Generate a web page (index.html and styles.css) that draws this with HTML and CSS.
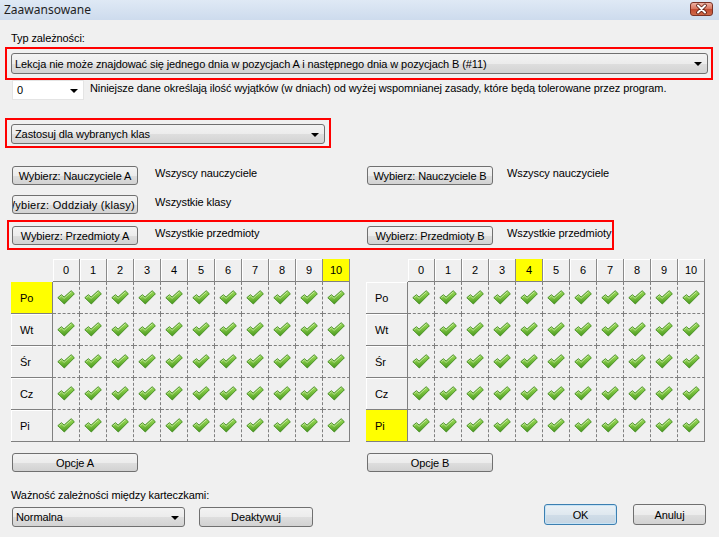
FILE: index.html
```html
<!DOCTYPE html>
<html lang="pl">
<head>
    <meta charset="UTF-8">
    <title>Zaawansowane</title>
    <link rel="stylesheet" href="styles.css">
</head>
<body>
    <svg class="defs" width="0" height="0">
        <defs>
            <linearGradient id="okFill" x1="0" y1="0" x2="0.3" y2="1">
                <stop offset="0" stop-color="#d2f2a0"/>
                <stop offset="0.45" stop-color="#88cd49"/>
                <stop offset="1" stop-color="#4b9a1f"/>
            </linearGradient>
            <symbol id="ok" viewBox="0 0 18 15">
                <path d="M0.8 7.7 L4.4 4.7 L7.1 7.1 L14.2 0.7 L17.4 3.8 L7.3 14 Z" fill="url(#okFill)" stroke="#3f8a1c" stroke-width="0.9" stroke-linejoin="round"/>
                <path d="M2.4 7.6 L4.4 5.9 L7.1 8.4 L14.2 2" fill="none" stroke="#eafad0" stroke-width="0.8" opacity="0.7"/>
            </symbol>
        </defs>
    </svg>

    <div class="titlebar">
        <span class="title">Zaawansowane</span>
        <span class="close">
            <svg width="21" height="12" viewBox="0 0 21 12">
                <path d="M7 2.5 L14 9.5 M14 2.5 L7 9.5" stroke="#5a1d12" stroke-width="3.6" stroke-linecap="round"/>
                <path d="M7 2.5 L14 9.5 M14 2.5 L7 9.5" stroke="#fff" stroke-width="2" stroke-linecap="round"/>
            </svg>
        </span>
    </div>

    <div class="type-label">Typ zależności:</div>
    <div class="hl hl-type">
        <div class="combo tall">Lekcja nie może znajdować się jednego dnia w pozycjach A i następnego dnia w pozycjach B (#11)</div>
    </div>

    <div class="exc-row">
        <div class="combo plain">0</div>
        <span class="exc-text">Niniejsze dane określają ilość wyjątków (w dniach) od wyżej wspomnianej zasady, które będą tolerowane przez program.</span>
    </div>

    <div class="hl hl-scope">
        <div class="combo">Zastosuj dla wybranych klas</div>
    </div>

    <div class="pick-row first">
        <div class="btn"><span>Wybierz: Nauczyciele A</span></div>
        <span class="pick-text">Wszyscy nauczyciele</span>
        <div class="btn"><span>Wybierz: Nauczyciele B</span></div>
        <span class="pick-text b">Wszyscy nauczyciele</span>
    </div>
    <div class="pick-row second">
        <div class="btn"><span class="wide">Wybierz: Oddziały (klasy) A</span></div>
        <span class="pick-text">Wszystkie klasy</span>
    </div>
    <div class="hl hl-pick">
        <div class="pick-row">
            <div class="btn"><span>Wybierz: Przedmioty A</span></div>
            <span class="pick-text">Wszystkie przedmioty</span>
            <div class="btn"><span>Wybierz: Przedmioty B</span></div>
            <span class="pick-text b">Wszystkie przedmioty</span>
        </div>
    </div>

    <div class="grids">
        <table class="days">
            <tr>
                <th class="corner"></th>
                <th class="hour">0</th><th class="hour">1</th><th class="hour">2</th><th class="hour">3</th><th class="hour">4</th><th class="hour">5</th><th class="hour">6</th><th class="hour">7</th><th class="hour">8</th><th class="hour">9</th><th class="hour mark">10</th>
            </tr>
            <tr>
                <th class="day mark">Po</th>
                <td><svg class="ok"><use href="#ok"/></svg></td><td><svg class="ok"><use href="#ok"/></svg></td><td><svg class="ok"><use href="#ok"/></svg></td><td><svg class="ok"><use href="#ok"/></svg></td><td><svg class="ok"><use href="#ok"/></svg></td><td><svg class="ok"><use href="#ok"/></svg></td><td><svg class="ok"><use href="#ok"/></svg></td><td><svg class="ok"><use href="#ok"/></svg></td><td><svg class="ok"><use href="#ok"/></svg></td><td><svg class="ok"><use href="#ok"/></svg></td><td><svg class="ok"><use href="#ok"/></svg></td>
            </tr>
            <tr>
                <th class="day">Wt</th>
                <td><svg class="ok"><use href="#ok"/></svg></td><td><svg class="ok"><use href="#ok"/></svg></td><td><svg class="ok"><use href="#ok"/></svg></td><td><svg class="ok"><use href="#ok"/></svg></td><td><svg class="ok"><use href="#ok"/></svg></td><td><svg class="ok"><use href="#ok"/></svg></td><td><svg class="ok"><use href="#ok"/></svg></td><td><svg class="ok"><use href="#ok"/></svg></td><td><svg class="ok"><use href="#ok"/></svg></td><td><svg class="ok"><use href="#ok"/></svg></td><td><svg class="ok"><use href="#ok"/></svg></td>
            </tr>
            <tr>
                <th class="day">Śr</th>
                <td><svg class="ok"><use href="#ok"/></svg></td><td><svg class="ok"><use href="#ok"/></svg></td><td><svg class="ok"><use href="#ok"/></svg></td><td><svg class="ok"><use href="#ok"/></svg></td><td><svg class="ok"><use href="#ok"/></svg></td><td><svg class="ok"><use href="#ok"/></svg></td><td><svg class="ok"><use href="#ok"/></svg></td><td><svg class="ok"><use href="#ok"/></svg></td><td><svg class="ok"><use href="#ok"/></svg></td><td><svg class="ok"><use href="#ok"/></svg></td><td><svg class="ok"><use href="#ok"/></svg></td>
            </tr>
            <tr>
                <th class="day">Cz</th>
                <td><svg class="ok"><use href="#ok"/></svg></td><td><svg class="ok"><use href="#ok"/></svg></td><td><svg class="ok"><use href="#ok"/></svg></td><td><svg class="ok"><use href="#ok"/></svg></td><td><svg class="ok"><use href="#ok"/></svg></td><td><svg class="ok"><use href="#ok"/></svg></td><td><svg class="ok"><use href="#ok"/></svg></td><td><svg class="ok"><use href="#ok"/></svg></td><td><svg class="ok"><use href="#ok"/></svg></td><td><svg class="ok"><use href="#ok"/></svg></td><td><svg class="ok"><use href="#ok"/></svg></td>
            </tr>
            <tr>
                <th class="day">Pi</th>
                <td><svg class="ok"><use href="#ok"/></svg></td><td><svg class="ok"><use href="#ok"/></svg></td><td><svg class="ok"><use href="#ok"/></svg></td><td><svg class="ok"><use href="#ok"/></svg></td><td><svg class="ok"><use href="#ok"/></svg></td><td><svg class="ok"><use href="#ok"/></svg></td><td><svg class="ok"><use href="#ok"/></svg></td><td><svg class="ok"><use href="#ok"/></svg></td><td><svg class="ok"><use href="#ok"/></svg></td><td><svg class="ok"><use href="#ok"/></svg></td><td><svg class="ok"><use href="#ok"/></svg></td>
            </tr>
        </table>

        <table class="days">
            <tr>
                <th class="corner"></th>
                <th class="hour">0</th><th class="hour">1</th><th class="hour">2</th><th class="hour">3</th><th class="hour mark">4</th><th class="hour">5</th><th class="hour">6</th><th class="hour">7</th><th class="hour">8</th><th class="hour">9</th><th class="hour">10</th>
            </tr>
            <tr>
                <th class="day">Po</th>
                <td><svg class="ok"><use href="#ok"/></svg></td><td><svg class="ok"><use href="#ok"/></svg></td><td><svg class="ok"><use href="#ok"/></svg></td><td><svg class="ok"><use href="#ok"/></svg></td><td><svg class="ok"><use href="#ok"/></svg></td><td><svg class="ok"><use href="#ok"/></svg></td><td><svg class="ok"><use href="#ok"/></svg></td><td><svg class="ok"><use href="#ok"/></svg></td><td><svg class="ok"><use href="#ok"/></svg></td><td><svg class="ok"><use href="#ok"/></svg></td><td><svg class="ok"><use href="#ok"/></svg></td>
            </tr>
            <tr>
                <th class="day">Wt</th>
                <td><svg class="ok"><use href="#ok"/></svg></td><td><svg class="ok"><use href="#ok"/></svg></td><td><svg class="ok"><use href="#ok"/></svg></td><td><svg class="ok"><use href="#ok"/></svg></td><td><svg class="ok"><use href="#ok"/></svg></td><td><svg class="ok"><use href="#ok"/></svg></td><td><svg class="ok"><use href="#ok"/></svg></td><td><svg class="ok"><use href="#ok"/></svg></td><td><svg class="ok"><use href="#ok"/></svg></td><td><svg class="ok"><use href="#ok"/></svg></td><td><svg class="ok"><use href="#ok"/></svg></td>
            </tr>
            <tr>
                <th class="day">Śr</th>
                <td><svg class="ok"><use href="#ok"/></svg></td><td><svg class="ok"><use href="#ok"/></svg></td><td><svg class="ok"><use href="#ok"/></svg></td><td><svg class="ok"><use href="#ok"/></svg></td><td><svg class="ok"><use href="#ok"/></svg></td><td><svg class="ok"><use href="#ok"/></svg></td><td><svg class="ok"><use href="#ok"/></svg></td><td><svg class="ok"><use href="#ok"/></svg></td><td><svg class="ok"><use href="#ok"/></svg></td><td><svg class="ok"><use href="#ok"/></svg></td><td><svg class="ok"><use href="#ok"/></svg></td>
            </tr>
            <tr>
                <th class="day">Cz</th>
                <td><svg class="ok"><use href="#ok"/></svg></td><td><svg class="ok"><use href="#ok"/></svg></td><td><svg class="ok"><use href="#ok"/></svg></td><td><svg class="ok"><use href="#ok"/></svg></td><td><svg class="ok"><use href="#ok"/></svg></td><td><svg class="ok"><use href="#ok"/></svg></td><td><svg class="ok"><use href="#ok"/></svg></td><td><svg class="ok"><use href="#ok"/></svg></td><td><svg class="ok"><use href="#ok"/></svg></td><td><svg class="ok"><use href="#ok"/></svg></td><td><svg class="ok"><use href="#ok"/></svg></td>
            </tr>
            <tr>
                <th class="day mark">Pi</th>
                <td><svg class="ok"><use href="#ok"/></svg></td><td><svg class="ok"><use href="#ok"/></svg></td><td><svg class="ok"><use href="#ok"/></svg></td><td><svg class="ok"><use href="#ok"/></svg></td><td><svg class="ok"><use href="#ok"/></svg></td><td><svg class="ok"><use href="#ok"/></svg></td><td><svg class="ok"><use href="#ok"/></svg></td><td><svg class="ok"><use href="#ok"/></svg></td><td><svg class="ok"><use href="#ok"/></svg></td><td><svg class="ok"><use href="#ok"/></svg></td><td><svg class="ok"><use href="#ok"/></svg></td>
            </tr>
        </table>
    </div>

    <div class="options">
        <div class="btn"><span>Opcje A</span></div>
        <div class="btn"><span>Opcje B</span></div>
    </div>

    <div class="footer">
        <div class="weight">
            <div class="weight-label">Ważność zależności między karteczkami:</div>
            <div class="weight-row">
                <div class="combo weight-combo">Normalna</div>
                <div class="btn deact"><span>Deaktywuj</span></div>
            </div>
        </div>
        <div class="actions">
            <div class="btn action default"><span>OK</span></div>
            <div class="btn action"><span>Anuluj</span></div>
        </div>
    </div>
</body>
</html>
```

FILE: styles.css
```css
* {
    box-sizing: border-box;
}

body {
    margin: 0;
    width: 719px;
    height: 537px;
    overflow: hidden;
    background-color: #f0f0f0;
    font-family: "Liberation Sans", Arial, sans-serif;
    font-size: 11px;
    line-height: 14px;
    letter-spacing: -0.1px;
    color: #000;
}

.defs {
    position: absolute;
    width: 0;
    height: 0;
}

/* title bar */

.titlebar {
    height: 20px;
    display: flex;
    align-items: center;
    justify-content: space-between;
    padding: 0 6px 0 4px;
    background: linear-gradient(#dfe9f5, #cddbed);
}

.title {
    font-family: "Noto Sans", sans-serif;
    font-size: 12px;
    letter-spacing: 0;
    color: #1e1e1e;
}

.close {
    width: 23px;
    height: 14px;
    margin-top: -3px;
    display: flex;
    align-items: center;
    justify-content: center;
    border: 1px solid #7a3124;
    border-radius: 3px;
    background: linear-gradient(#eeb1a2, #d7735c 50%, #c2492f 51%, #cf6a4a);
}

.close svg {
    display: block;
}

/* red highlight frames */

.hl {
    border: 2px solid #ff0000;
}

.hl-type {
    width: 708px;
    margin: 2px 0 0 5px;
    padding: 4px 3px 4px 4px;
}

.hl-scope {
    width: 326px;
    margin: 18px 0 0 5px;
    padding: 4px 4px 2px 4px;
}

.hl-pick {
    width: 607px;
    margin: 6px 0 0 7px;
    padding: 4px 3px 3px 3px;
}

.type-label {
    margin: 11px 0 0 11px;
}

/* combo boxes and buttons */

.combo {
    position: relative;
    height: 20px;
    padding: 2px 20px 0 3px;
    border: 1px solid #707070;
    border-radius: 3px;
    background: linear-gradient(#f3f3f3, #ececec 50%, #dedede 51%, #d3d3d3);
    white-space: nowrap;
    overflow: hidden;
}

.combo.tall {
    height: 21px;
    padding-top: 3px;
}

.combo::after {
    content: "";
    position: absolute;
    right: 5px;
    top: 8px;
    border-left: 4px solid transparent;
    border-right: 4px solid transparent;
    border-top: 4px solid #000;
}

.combo.plain {
    width: 72px;
    border-color: #e4e4e4;
    border-radius: 0;
    background: #fff;
    padding-left: 4px;
}

.btn {
    height: 19px;
    display: flex;
    justify-content: center;
    align-items: center;
    overflow: hidden;
    white-space: nowrap;
    border: 1px solid #707070;
    border-radius: 3px;
    background: linear-gradient(#f3f3f3, #ececec 50%, #dedede 51%, #d2d2d2);
}

.btn span {
    flex-shrink: 0;
}

.btn .wide {
    letter-spacing: 0.25px;
}

/* exceptions row */

.exc-row {
    display: flex;
    align-items: flex-start;
    margin-left: 12px;
}

.exc-text {
    margin: 1px 0 0 6px;
    white-space: nowrap;
}

/* picker rows */

.pick-row {
    display: grid;
    grid-template-columns: 126px 229px 126px auto;
    align-items: start;
}

.pick-row.first {
    margin: 18px 0 0 12px;
}

.pick-row.second {
    margin: 10px 0 0 12px;
}

.pick-text {
    padding-left: 17px;
    margin-top: 0;
    white-space: nowrap;
}

.pick-text.b {
    padding-left: 14px;
}

/* day / hour grids */

.grids {
    display: flex;
    gap: 16px;
    margin: 9px 0 0 11px;
}

.days {
    border-spacing: 0;
    table-layout: fixed;
}

.days th,
.days td {
    padding: 0;
    font-weight: normal;
}

.days .corner {
    width: 42px;
}

.days .hour {
    width: 27px;
    height: 23px;
    text-align: center;
    border-right: 1px solid #8a8a8a;
    border-bottom: 1px solid #808080;
    box-shadow: inset 1px 1px #fff;
}

.days .day {
    width: 42px;
    height: 32px;
    text-align: left;
    padding-left: 9px;
    border-right: 1px solid #808080;
    border-bottom: 1px solid #808080;
    box-shadow: inset 1px 1px #fff;
}

.days td {
    width: 27px;
    height: 32px;
    border-right: 1px dashed #808080;
    border-bottom: 1px dashed #808080;
}

.days td:last-child {
    border-right-style: solid;
}

.days tr:last-child td {
    border-bottom-style: solid;
}

.days .mark {
    background-color: #ffff00;
    box-shadow: none;
}

.ok {
    display: block;
    width: 18px;
    height: 15px;
    margin: 0 auto;
}

/* option buttons */

.options {
    display: flex;
    gap: 229px;
    margin: 11px 0 0 12px;
}

.options .btn {
    width: 126px;
}

/* footer */

.footer {
    display: flex;
    margin: 16px 0 0 0;
}

.weight {
    margin-left: 11px;
}

.weight-row {
    display: flex;
    gap: 14px;
    margin: 5px 0 0 1px;
}

.weight-combo {
    width: 173px;
}

.deact {
    width: 114px;
    height: 20px;
}

.actions {
    display: flex;
    gap: 16px;
    margin: 16px 0 0 auto;
    padding-right: 13px;
}

.action {
    width: 73px;
    height: 21px;
}

.action.default {
    border-color: #3c7fb1;
    background: linear-gradient(#eaf1f6, #dfe8ef 50%, #d0dde8 51%, #c6d5e2);
    box-shadow: inset 0 0 0 1px #c7e3f5;
}
```
